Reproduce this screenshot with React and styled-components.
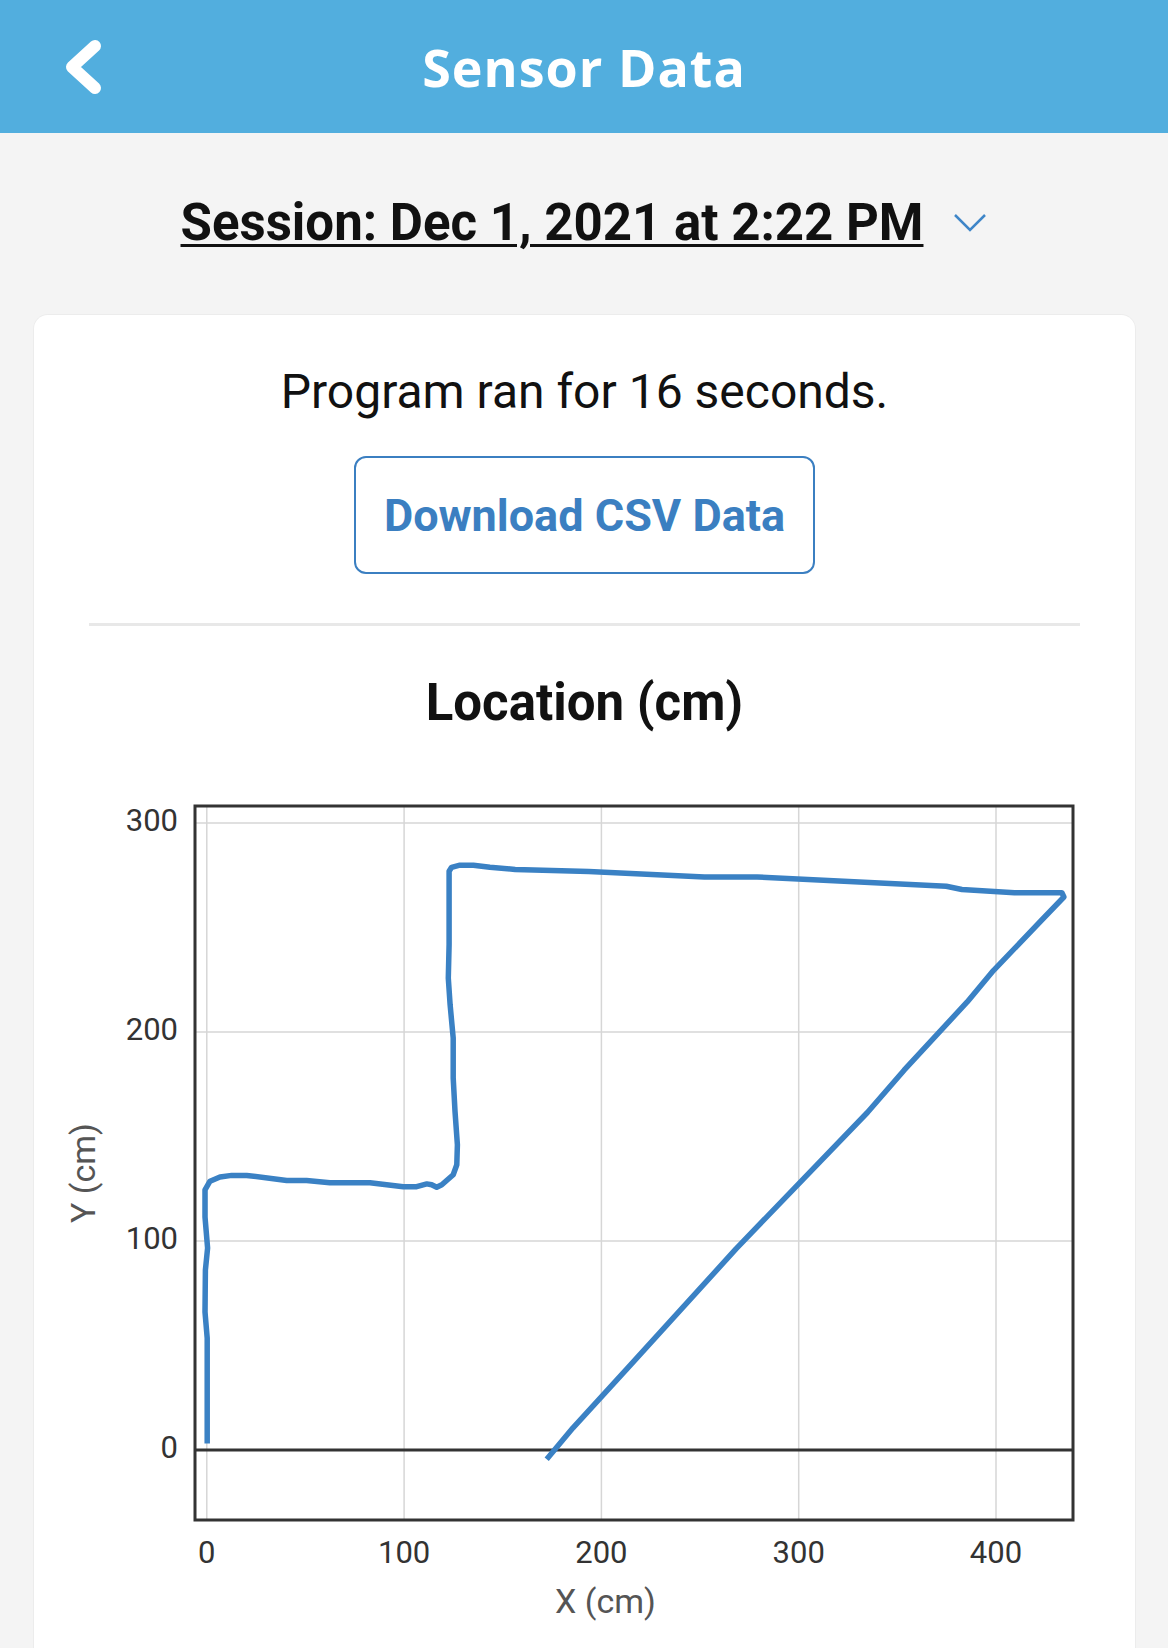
import React from 'react'
import styled, { createGlobalStyle } from 'styled-components'

const colors = {
  header: '#52aede',
  page: '#f4f4f4',
  ink: '#111111',
  blue: '#3b7fc1',
  trace: '#3a81c4',
  axis: '#333333',
  grid: '#d6d6d6',
  muted: '#555555',
  rule: '#e8e8e8',
}

// robot position samples, in cm
const track = [
  [0.2, 3.1], [0.2, 53.6], [-0.9, 66], [-0.7, 86.1], [0.4, 96.7], [-0.9, 111.5],
  [-0.9, 124.5], [1.6, 128.6], [6.7, 130.6], [12.6, 131.4], [20.2, 131.4],
  [40.5, 129], [50.6, 129], [62.4, 127.9], [82.7, 127.9], [99.6, 126],
  [106.4, 126], [111.5, 127.3], [114, 126.9], [116.5, 125.7], [119.1, 126.9],
  [124.9, 131.7], [126.7, 136.5], [127, 146.1], [125.8, 162.1], [124.9, 178],
  [124.9, 197.1], [123.3, 213.1], [122.4, 225.8], [122.8, 241.8], [122.8, 276.9],
  [124.1, 278.8], [128.3, 279.8], [135.1, 279.8], [143.5, 278.8], [156.3, 277.8],
  [193.6, 276.8], [252.2, 274.2], [278.9, 274.2], [374.8, 269.7], [382.7, 268.2],
  [409.4, 266.6], [433.4, 266.6], [434.4, 264.6], [422.7, 253.1], [398.7, 229.4],
  [385.4, 214.4], [353.4, 181.7], [334.8, 161.5], [268.2, 96.2], [214.9, 40.8],
  [185.6, 10.6], [172.3, -4.4],
]

const plot = { left: 161, right: 1039, top: 48, bottom: 762 }
const sx = (x) => 172.8 + 1.973 * x
const sy = (y) => 692 - 2.09 * y

const GlobalStyle = createGlobalStyle`
  * { box-sizing: border-box; }
  html, body {
    margin: 0;
    padding: 0;
    background: ${colors.page};
  }
  body {
    font-family: Roboto, 'Liberation Sans', sans-serif;
    color: ${colors.ink};
  }
`

const LocationChart = () => {
  const points = track.map(([x, y]) => `${sx(x).toFixed(1)},${sy(y).toFixed(1)}`).join(' ')
  return (
    <ChartSvg viewBox='0 0 1101 880' width='1101' height='880'>
      {[0, 100, 200, 300, 400].map((v) => (
        <line key={'vx' + v} x1={sx(v)} x2={sx(v)} y1={plot.top} y2={plot.bottom} stroke={colors.grid} strokeWidth='1.5' />
      ))}
      {[100, 200, 300].map((v) => (
        <line key={'hy' + v} x1={plot.left} x2={plot.right} y1={sy(v)} y2={sy(v)} stroke={colors.grid} strokeWidth='1.5' />
      ))}
      <line x1={plot.left} x2={plot.right} y1={sy(0)} y2={sy(0)} stroke={colors.axis} strokeWidth='3' />
      <rect
        x={plot.left}
        y={plot.top}
        width={plot.right - plot.left}
        height={plot.bottom - plot.top}
        fill='none'
        stroke={colors.axis}
        strokeWidth='3'
      />
      <polyline points={points} fill='none' stroke={colors.trace} strokeWidth='5.5' strokeLinejoin='round' />

      {[0, 100, 200, 300].map((v) => (
        <TickLabel key={'ty' + v} x='144' y={sy(v) + 8} textAnchor='end'>{v}</TickLabel>
      ))}
      {[0, 100, 200, 300, 400].map((v) => (
        <TickLabel key={'tx' + v} x={sx(v)} y='805' textAnchor='middle'>{v}</TickLabel>
      ))}
      <AxisTitle x='571.5' y='855' textAnchor='middle'>X (cm)</AxisTitle>
      <AxisTitle x='61' y='415' textAnchor='middle' transform='rotate(-90 61 415)'>Y (cm)</AxisTitle>
    </ChartSvg>
  )
}

const App = () => {
  return (
    <>
      <GlobalStyle />
      <Header>
        <BackButton aria-label='Back'>
          <svg width='48' height='64' viewBox='0 0 48 64'>
            <polyline points='35,11 12,32 35,53' fill='none' stroke='#fff' strokeWidth='12' strokeLinecap='round' strokeLinejoin='round' />
          </svg>
        </BackButton>
        <Title>Sensor Data</Title>
      </Header>

      <SessionRow>
        <SessionLabel>Session: Dec 1, 2021 at 2:22 PM</SessionLabel>
        <svg width='34' height='20' viewBox='0 0 34 20'>
          <polyline points='2,2 17,17 32,2' fill='none' stroke='#3f86c8' strokeWidth='2.5' />
        </svg>
      </SessionRow>

      <Card>
        <Duration>Program ran for 16 seconds.</Duration>
        <DownloadButton>Download CSV Data</DownloadButton>
        <Divider />
        <ChartTitle>Location (cm)</ChartTitle>
        <LocationChart />
      </Card>
    </>
  )
}

const Header = styled.header`
  height: 133px;
  background: ${colors.header};
  display: grid;
  grid-template-columns: 1fr auto 1fr;
  align-items: center;
`
const BackButton = styled.button`
  justify-self: start;
  margin-left: 60px;
  padding: 0;
  border: none;
  background: none;
  display: flex;
  cursor: pointer;
`
const Title = styled.h1`
  margin: 0;
  font-family: 'Open Sans', 'Liberation Sans', sans-serif;
  font-size: 52px;
  font-weight: 700;
  letter-spacing: 1px;
  color: #fff;
`
const SessionRow = styled.div`
  display: flex;
  justify-content: center;
  align-items: center;
  gap: 30px;
  margin: 59px 0 62px;
`
const SessionLabel = styled.span`
  font-size: 51px;
  font-weight: 700;
  line-height: 61px;
  text-decoration: underline;
  text-decoration-thickness: 3px;
  text-underline-offset: 4px;
`
const Card = styled.section`
  margin: 0 33px 0 34px;
  background: #fff;
  border-radius: 14px;
  box-shadow: 0 0 0 1px rgba(0, 0, 0, 0.03);
  padding: 48px 55px 40px;
  display: flex;
  flex-direction: column;
  align-items: center;
`
const Duration = styled.p`
  margin: 0;
  font-size: 48px;
  font-weight: 400;
`
const DownloadButton = styled.button`
  margin-top: 36px;
  width: 461px;
  height: 118px;
  border: 2.5px solid ${colors.blue};
  border-radius: 12px;
  background: #fff;
  color: ${colors.blue};
  font-family: Roboto, 'Liberation Sans', sans-serif;
  font-size: 45px;
  font-weight: 700;
  cursor: pointer;
`
const Divider = styled.hr`
  align-self: stretch;
  margin: 49px 0 0;
  height: 3px;
  border: none;
  background: ${colors.rule};
`
const ChartTitle = styled.h2`
  margin: 47px 0 0;
  font-size: 51px;
  font-weight: 700;
`
const ChartSvg = styled.svg`
  display: block;
  margin: 26px -55px 0;
  overflow: visible;
`
const TickLabel = styled.text`
  font-family: Roboto, 'Liberation Sans', sans-serif;
  font-size: 31px;
  fill: ${colors.axis};
`
const AxisTitle = styled.text`
  font-family: Roboto, 'Liberation Sans', sans-serif;
  font-size: 34px;
  fill: ${colors.muted};
`

export default App
